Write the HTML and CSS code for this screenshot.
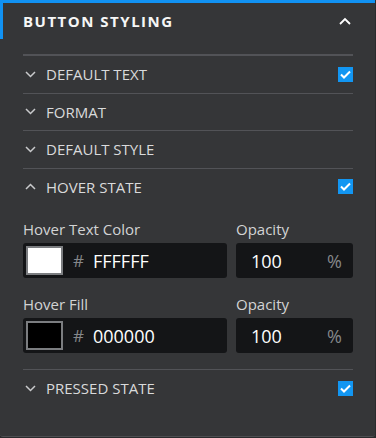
FILE: index.html
```html
<!DOCTYPE html>
<html lang="en">
<head>
    <meta charset="UTF-8">
    <title>Button Styling</title>
    <link rel="stylesheet" href="styles.css">
</head>
<body>
    <div class="panel">
        <header class="panel-head">
            <h2 class="panel-title">BUTTON STYLING</h2>
            <svg class="head-chevron" width="12" height="8" viewBox="0 0 12 8">
                <path d="M1 7 L6 2 L11 7" fill="none" stroke="#fff" stroke-width="1.8"/>
            </svg>
        </header>

        <div class="panel-body">
            <div class="row row-first">
                <svg class="chevron" width="11" height="7" viewBox="0 0 11 7"><path d="M1 1 L5.5 5.5 L10 1"/></svg>
                <span class="row-label">DEFAULT TEXT</span>
                <span class="check"><svg width="11" height="9" viewBox="0 0 11 9"><path d="M1 4.5 L4 7.5 L10 1.5"/></svg></span>
            </div>
            <div class="row">
                <svg class="chevron" width="11" height="7" viewBox="0 0 11 7"><path d="M1 1 L5.5 5.5 L10 1"/></svg>
                <span class="row-label">FORMAT</span>
            </div>
            <div class="row">
                <svg class="chevron" width="11" height="7" viewBox="0 0 11 7"><path d="M1 1 L5.5 5.5 L10 1"/></svg>
                <span class="row-label">DEFAULT STYLE</span>
            </div>
            <div class="row">
                <svg class="chevron" width="11" height="7" viewBox="0 0 11 7"><path d="M1 6 L5.5 1.5 L10 6"/></svg>
                <span class="row-label">HOVER STATE</span>
                <span class="check"><svg width="11" height="9" viewBox="0 0 11 9"><path d="M1 4.5 L4 7.5 L10 1.5"/></svg></span>
            </div>

            <div class="fields">
                <div class="field-grid">
                    <label class="field-label">Hover Text Color</label>
                    <label class="field-label">Opacity</label>
                    <div class="input color-input">
                        <span class="swatch swatch-white"></span>
                        <span class="hash">#</span>
                        <span class="value">FFFFFF</span>
                    </div>
                    <div class="input opacity-input">
                        <span class="value">100</span>
                        <span class="unit">%</span>
                    </div>
                </div>
                <div class="field-grid">
                    <label class="field-label">Hover Fill</label>
                    <label class="field-label">Opacity</label>
                    <div class="input color-input">
                        <span class="swatch swatch-black"></span>
                        <span class="hash">#</span>
                        <span class="value">000000</span>
                    </div>
                    <div class="input opacity-input">
                        <span class="value">100</span>
                        <span class="unit">%</span>
                    </div>
                </div>
            </div>

            <div class="row">
                <svg class="chevron" width="11" height="7" viewBox="0 0 11 7"><path d="M1 1 L5.5 5.5 L10 1"/></svg>
                <span class="row-label">PRESSED STATE</span>
                <span class="check"><svg width="11" height="9" viewBox="0 0 11 9"><path d="M1 4.5 L4 7.5 L10 1.5"/></svg></span>
            </div>
        </div>
    </div>
</body>
</html>
```

FILE: styles.css
```css
body {
    margin: 0;
    padding: 0;
    background: #2a2b2d;
    font-family: "Open Sans", "Liberation Sans", sans-serif;
}

.panel {
    width: 375px;
    height: 437px;
    box-sizing: border-box;
    background: #353638;
    border-bottom: 1px solid #4d4e51;
    border-radius: 0 0 3px 3px;
}

.panel-head {
    height: 39px;
    box-sizing: border-box;
    border-top: 3px solid #1192f3;
    border-left: 3px solid #1192f3;
    padding: 0 24px 0 20px;
    display: flex;
    align-items: center;
    justify-content: space-between;
}

.panel-title {
    margin: 0;
    color: #f6f6f6;
    font-size: 15px;
    font-weight: 700;
    letter-spacing: 1.5px;
}

.head-chevron {
    display: block;
}

.panel-body {
    padding: 15px 22px 0 23px;
}

.row {
    height: 36.5px;
    border-top: 1px solid #525357;
    display: flex;
    align-items: center;
}

.row-first {
    border-top-width: 2px;
}

.chevron {
    display: block;
    margin: 0 10px 0 2px;
}

.chevron path {
    fill: none;
    stroke: #c9cacc;
    stroke-width: 1.5;
}

.row-label {
    flex: 1;
    color: #d9dadb;
    font-size: 15px;
}

.check {
    width: 15px;
    height: 15px;
    background: #1296f2;
    display: flex;
    align-items: center;
    justify-content: center;
}

.check svg {
    display: block;
}

.check path {
    fill: none;
    stroke: #fff;
    stroke-width: 2;
}

.fields {
    padding: 13.5px 0 16px;
    display: flex;
    flex-direction: column;
    gap: 15.5px;
}

.field-grid {
    display: grid;
    grid-template-columns: 204px 117px;
    column-gap: 9px;
    row-gap: 4.5px;
}

.field-label {
    color: #d2d3d4;
    font-size: 15px;
    line-height: 20px;
}

.input {
    height: 35px;
    box-sizing: border-box;
    background: #141517;
    border-radius: 3px;
    display: flex;
    align-items: center;
}

.color-input {
    padding: 0 3px;
}

.swatch {
    width: 37px;
    height: 29px;
    box-sizing: border-box;
    border: 2px solid #7b7d80;
}

.swatch-white { background: #fff; }
.swatch-black { background: #000; }

.hash {
    color: #85878a;
    font-size: 17px;
    margin: 0 9px 0 10px;
}

.value {
    color: #fff;
    font-size: 18px;
}

.opacity-input {
    padding: 0 11px 0 15px;
    justify-content: space-between;
}

.unit {
    color: #85878a;
    font-size: 18px;
}
```
